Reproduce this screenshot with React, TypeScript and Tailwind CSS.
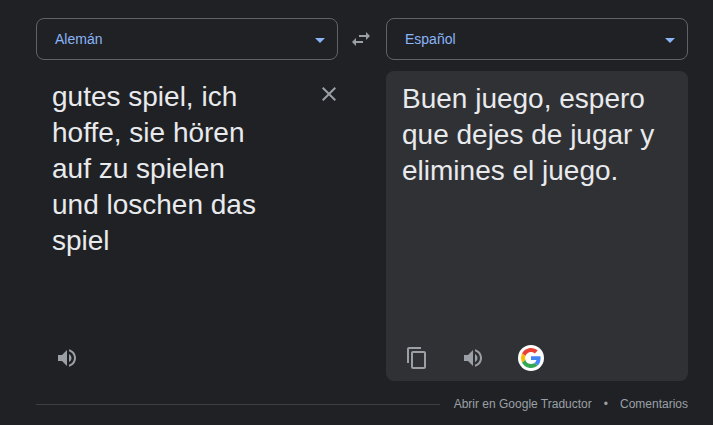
const fontStack = "font-['Liberation_Sans',Arial,sans-serif]";

const LanguageSelect = ({ label }: { label: string }) => (
    <div className="flex h-[42px] w-[302px] items-center justify-between rounded-lg border border-[#5f6368] pl-[18px] pr-3">
        <span className="text-sm text-[#8ab4f8]">{label}</span>
        <span className="mt-[2px] h-0 w-0 border-x-[5px] border-t-[5px] border-x-transparent border-t-[#8ab4f8]" />
    </div>
);

const SpeakerIcon = () => (
    <svg viewBox="0 0 24 24" className="h-6 w-6 fill-[#9aa0a6]">
        <path d="M3 9v6h4l5 5V4L7 9H3zm13.5 3c0-1.77-1.02-3.29-2.5-4.03v8.05c1.48-.73 2.5-2.25 2.5-4.02zM14 3.23v2.06c2.89.86 5 3.54 5 6.71s-2.11 5.85-5 6.71v2.06c4.01-.91 7-4.49 7-8.77s-2.99-7.86-7-8.77z" />
    </svg>
);

const CopyIcon = () => (
    <svg viewBox="0 0 24 24" className="h-6 w-6 fill-[#9aa0a6]">
        <path d="M16 1H4c-1.1 0-2 .9-2 2v14h2V3h12V1zm3 4H8c-1.1 0-2 .9-2 2v14c0 1.1.9 2 2 2h11c1.1 0 2-.9 2-2V7c0-1.1-.9-2-2-2zm0 16H8V7h11v14z" />
    </svg>
);

const SwapIcon = () => (
    <div className="pr-[2px]">
        <svg viewBox="0 0 24 24" className="h-6 w-6 fill-[#9aa0a6]">
            <path d="M6.99 11 3 15l3.99 4v-3H14v-2H6.99v-3zM21 9l-3.99-4v3H10v2h7.01v3L21 9z" />
        </svg>
    </div>
);

const CloseIcon = () => (
    <svg viewBox="0 0 24 24" className="h-6 w-6 shrink-0 fill-[#9aa0a6]">
        <path d="M19 6.41 17.59 5 12 10.59 6.41 5 5 6.41 10.59 12 5 17.59 6.41 19 12 13.41 17.59 19 19 17.59 13.41 12z" />
    </svg>
);

const GoogleLogo = () => (
    <div className="flex h-[26px] w-[26px] items-center justify-center rounded-full bg-white">
        <svg viewBox="0 0 48 48" className="h-5 w-5">
            <path fill="#EA4335" d="M24 9.5c3.54 0 6.71 1.22 9.21 3.6l6.85-6.85C35.9 2.38 30.47 0 24 0 14.62 0 6.51 5.38 2.56 13.22l7.98 6.19C12.43 13.72 17.74 9.5 24 9.5z" />
            <path fill="#4285F4" d="M46.98 24.55c0-1.57-.15-3.09-.38-4.55H24v9.02h12.94c-.58 2.96-2.26 5.48-4.78 7.18l7.73 6c4.51-4.18 7.09-10.36 7.09-17.65z" />
            <path fill="#FBBC05" d="M10.53 28.59c-.48-1.45-.76-2.99-.76-4.59s.27-3.14.76-4.59l-7.98-6.19C.92 16.46 0 20.12 0 24c0 3.88.92 7.54 2.56 10.78l7.97-6.19z" />
            <path fill="#34A853" d="M24 48c6.48 0 11.93-2.13 15.89-5.81l-7.73-6c-2.15 1.45-4.92 2.3-8.16 2.3-6.26 0-11.57-4.22-13.47-9.91l-7.98 6.19C6.51 42.62 14.62 48 24 48z" />
        </svg>
    </div>
);

export default function App() {
    return (
        <div className={`h-[425px] w-[713px] overflow-hidden bg-[#202124] pl-9 pr-[25px] pt-[18px] ${fontStack}`}>
            {/* Language selectors */}
            <div className="flex items-center justify-between">
                <LanguageSelect label="Alemán" />
                <SwapIcon />
                <LanguageSelect label="Español" />
            </div>

            {/* Source and translation */}
            <div className="mt-[11px] flex h-[310px] justify-between">
                <div className="flex w-[302px] flex-col justify-between pb-[11px] pl-4 pt-2">
                    <div className="flex justify-between">
                        <p className="w-[216px] text-[28px] leading-[36px] text-[#e8eaed]">
                            gutes spiel, ich hoffe, sie hören auf zu spielen und loschen das spiel
                        </p>
                        <div className="mr-[-3px] mt-[3px]">
                            <CloseIcon />
                        </div>
                    </div>
                    <div className="ml-[3px]">
                        <SpeakerIcon />
                    </div>
                </div>
                <div className="flex w-[302px] flex-col justify-between rounded-lg bg-[#303134] pb-[10px] pl-[19px] pr-4 pt-[10px]">
                    <p className="-ml-[3px] text-[28px] leading-[36px] text-[#e8eaed]">
                        Buen juego, espero que dejes de jugar y elimines el juego.
                    </p>
                    <div className="flex items-center">
                        <CopyIcon />
                        <div className="ml-8">
                            <SpeakerIcon />
                        </div>
                        <div className="ml-[33px]">
                            <GoogleLogo />
                        </div>
                    </div>
                </div>
            </div>

            {/* Footer */}
            <div className="mt-[15px] flex items-center text-xs text-[#9aa0a6]">
                <div className="h-px flex-1 bg-[#3c4043]" />
                <span className="ml-[14px]">Abrir en Google Traductor</span>
                <span className="mx-[12px]">•</span>
                <span>Comentarios</span>
            </div>
        </div>
    );
}
